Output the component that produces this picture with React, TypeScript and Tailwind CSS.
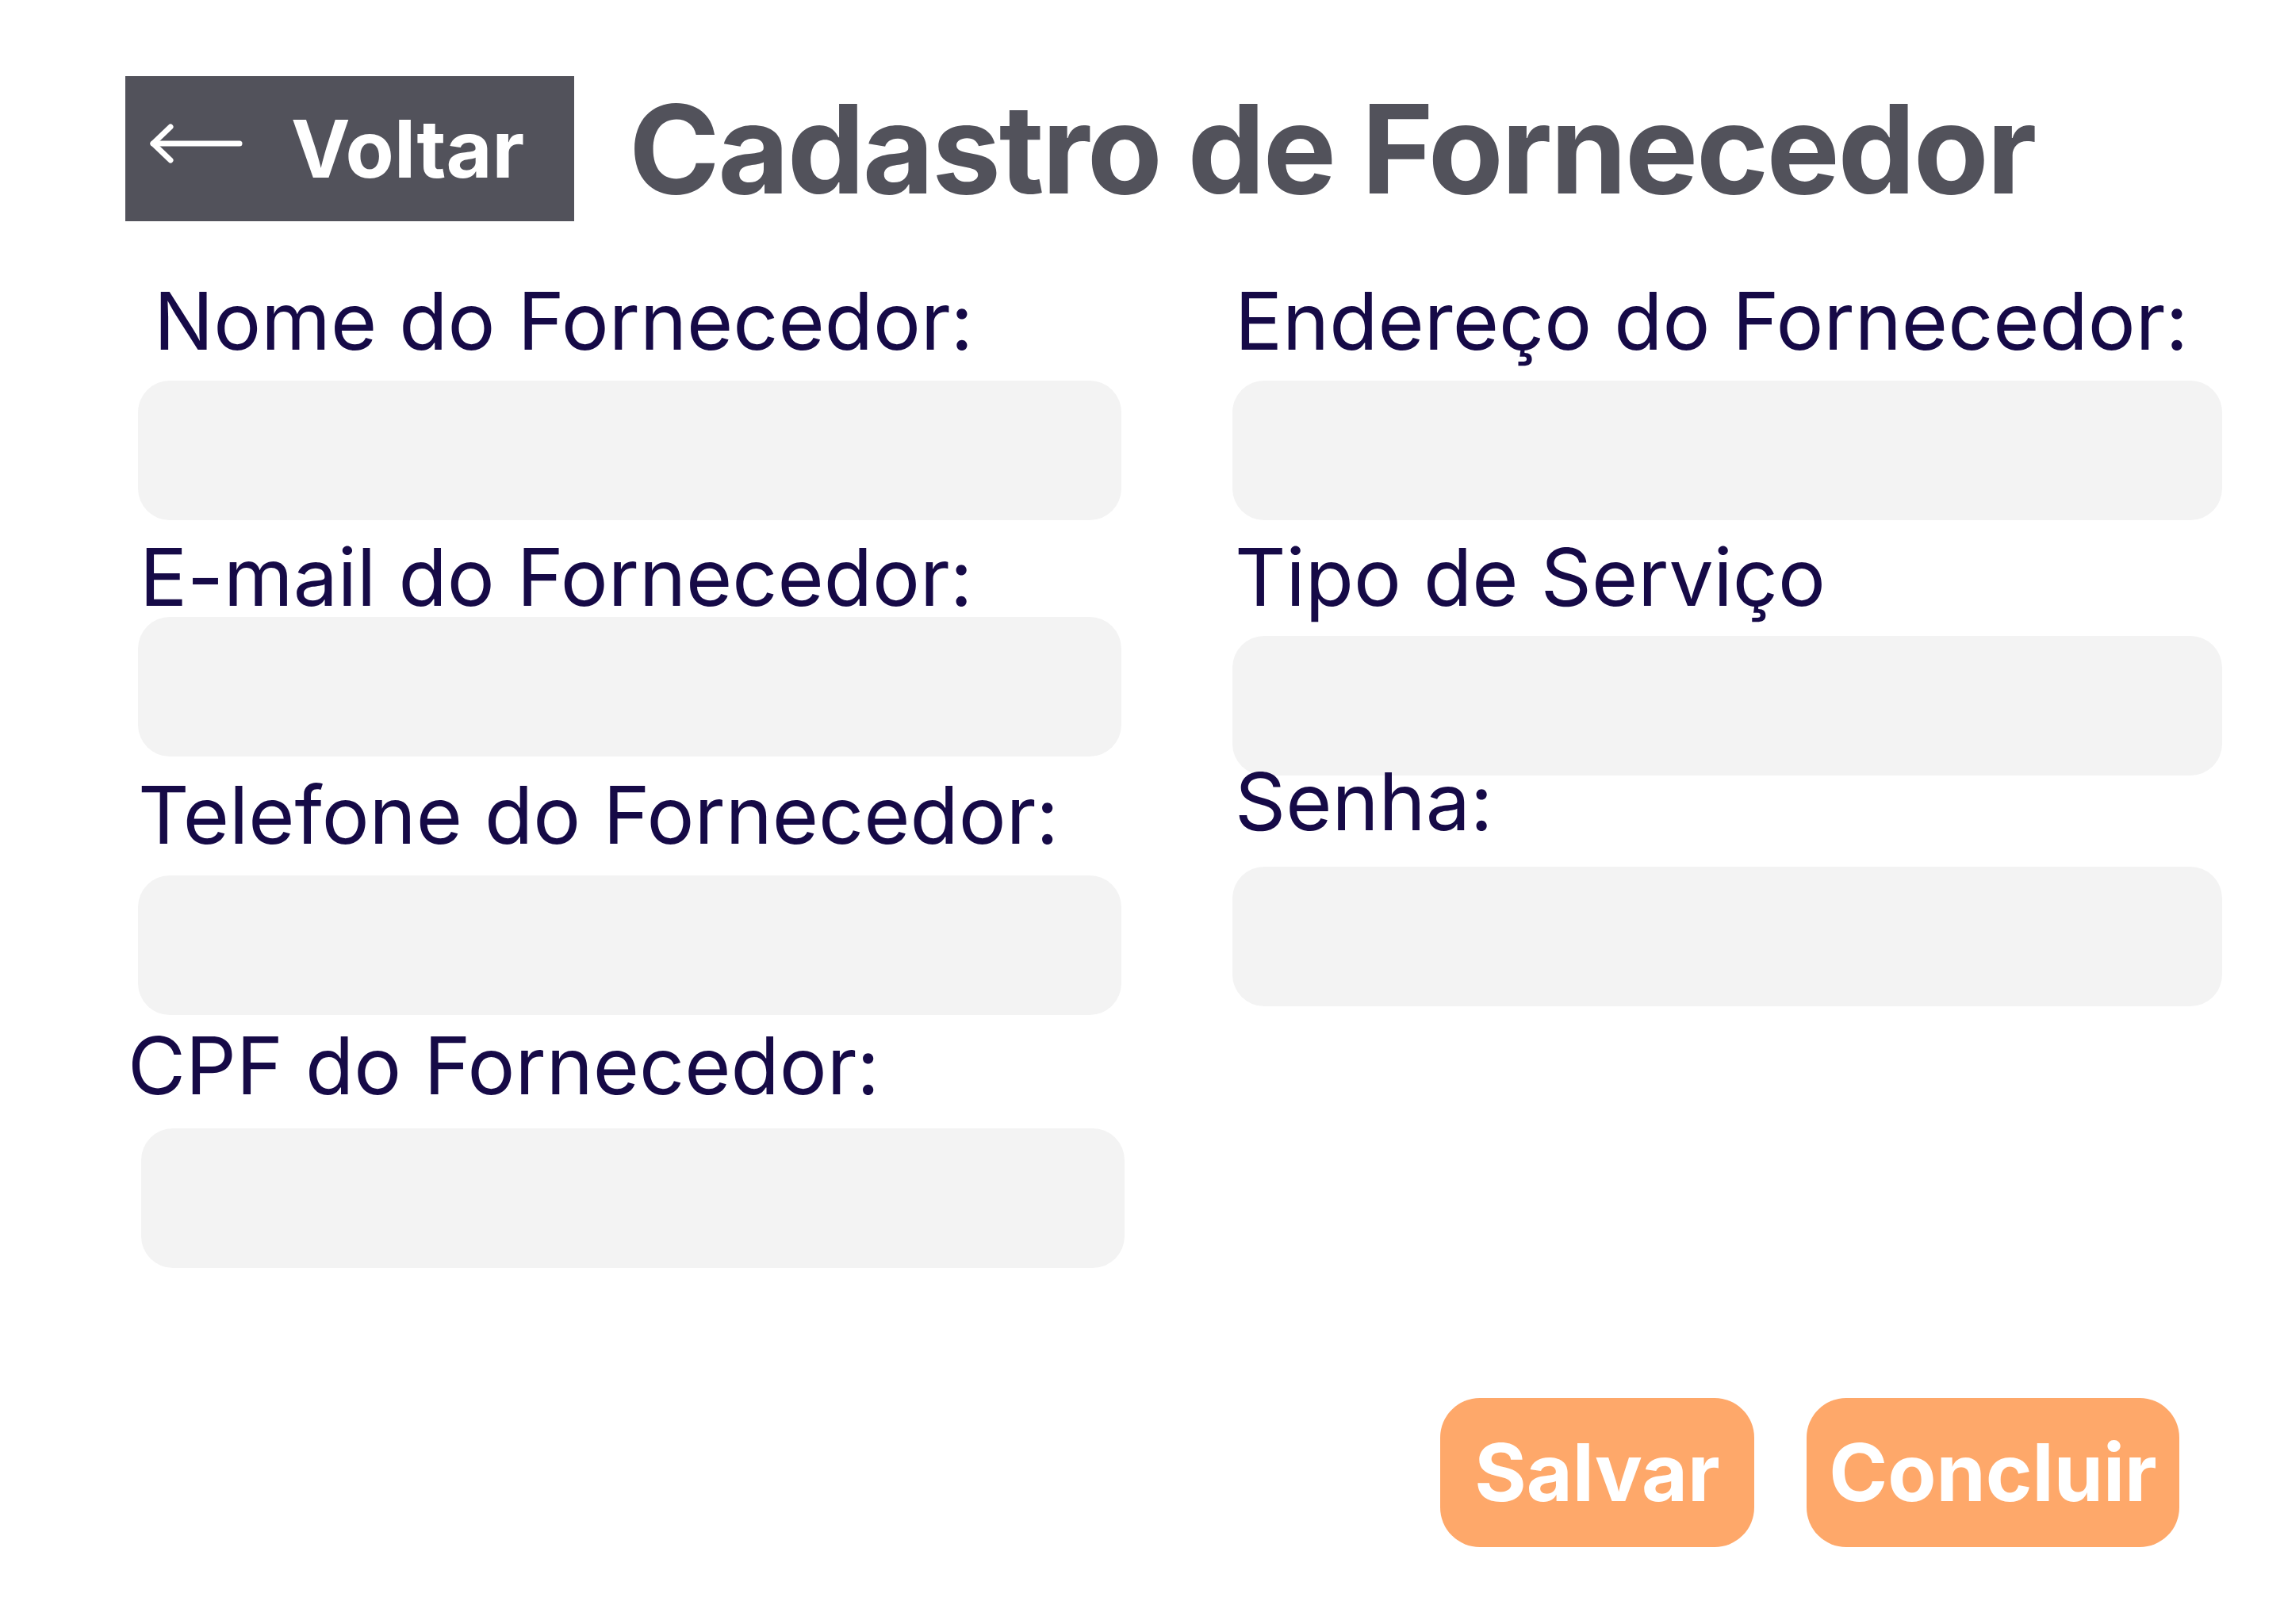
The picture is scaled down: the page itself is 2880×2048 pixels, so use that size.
import React from 'react';

const labelClass = 'block text-[100px] leading-none text-[#160a47]';
const inputClass = 'block h-[176px] w-full rounded-[40px] bg-[#f3f3f3] outline-none';

function BackArrow() {
  return (
    <svg width="120" height="56" viewBox="0 0 120 56" fill="none" className="-mt-[14px] shrink-0">
      <path d="M4 28 H113" stroke="white" strokeWidth="7" strokeLinecap="round" />
      <path d="M26 7 L4 28 L26 49" stroke="white" strokeWidth="7" strokeLinecap="round" strokeLinejoin="round" />
    </svg>
  );
}

export default function App() {
  return (
    <div className="min-h-screen bg-white font-['Inter',sans-serif] pt-[96px] pl-[158px]">
      {/* Header */}
      <header className="flex items-center gap-[69px]">
        <button className="flex h-[183px] w-[566px] items-center bg-[#52525b] pl-[31px]">
          <BackArrow />
          <span className="ml-[58px] text-[100px] font-bold leading-none text-white">Voltar</span>
        </button>
        <h1 className="text-[155px] font-bold leading-none tracking-[-2.5px] text-[#52525b]">
          Cadastro de Fornecedor
        </h1>
      </header>

      {/* Form */}
      <main className="mt-[76px] ml-[16px] grid w-[2628px] grid-cols-[1240px_1248px] gap-x-[140px]">
        <div className="flex flex-col">
          <label className={`${labelClass} ml-[20px]`}>Nome do Fornecedor:</label>
          <input className={`${inputClass} mt-[25px]`} />
          <label className={`${labelClass} mt-[22px] ml-[2px]`}>E-mail do Fornecedor:</label>
          <input className={`${inputClass} mt-0 h-[173px]`} />
          <label className={`${labelClass} mt-[24px]`}>Telefone do Fornecedor:</label>
          <input className={`${inputClass} mt-[26px] h-[174px]`} />
          <label className={`${labelClass} mt-[14px] -ml-[13px]`}>CPF do Fornecedor:</label>
          <input className={`${inputClass} mt-[29px] ml-[4px] w-[1236px] h-[174px]`} />
        </div>
        <div className="flex flex-col">
          <label className={`${labelClass} ml-[3px]`}>Endereço do Fornecedor:</label>
          <input className={`${inputClass} mt-[25px]`} />
          <label className={`${labelClass} mt-[22px] ml-[3px]`}>Tipo de Serviço</label>
          <input className={`${inputClass} mt-[24px] h-[172px]`} />
          <label className={`${labelClass} -mt-[17px] ml-[3px]`}>Senha:</label>
          <input type="password" className={`${inputClass} mt-[32px] h-[172px]`} />
        </div>
      </main>

      {/* Actions */}
      <div className="mt-[164px] flex justify-end gap-[66px] pr-[132px]">
        <button className="flex h-[188px] w-[396px] items-center justify-center rounded-[50px] bg-[#fea86a] text-[100px] font-bold leading-none text-white">
          Salvar
        </button>
        <button className="flex h-[188px] w-[470px] items-center justify-center rounded-[50px] bg-[#fea86a] text-[100px] font-bold leading-none text-white">
          Concluir
        </button>
      </div>
    </div>
  );
}
